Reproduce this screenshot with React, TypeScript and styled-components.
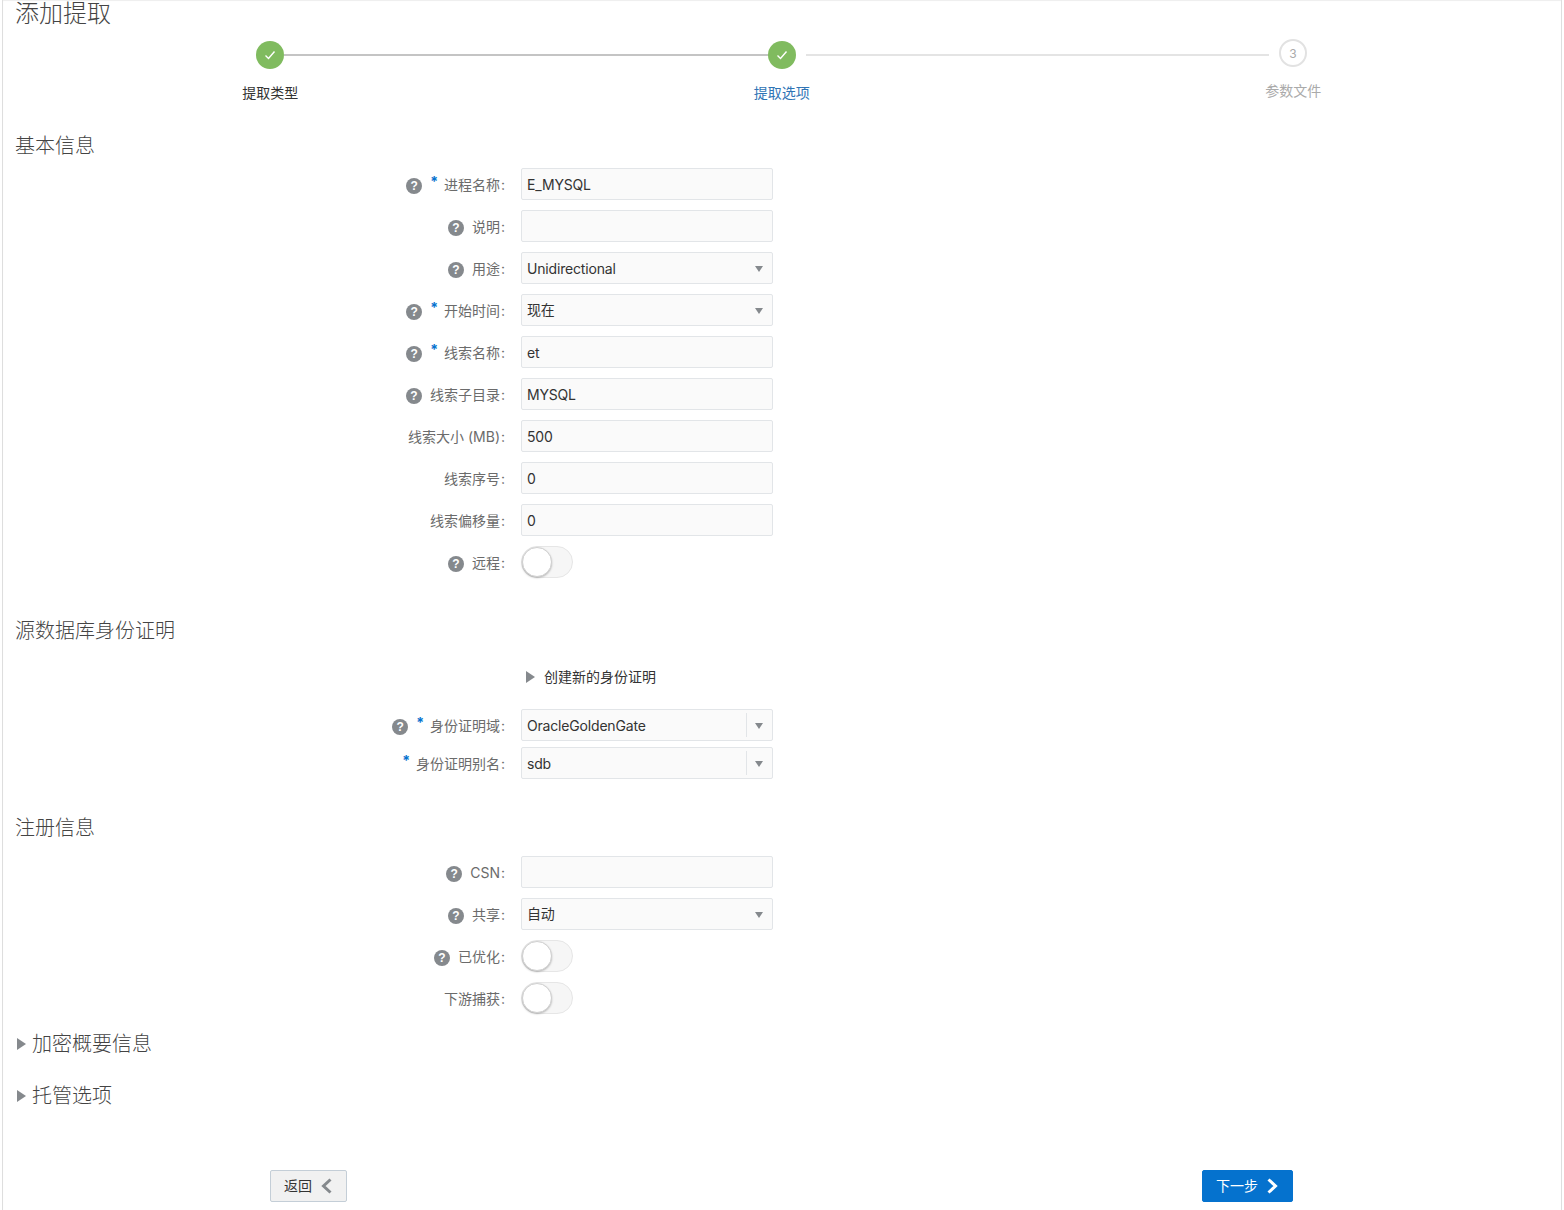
import React from 'react'
import styled, { createGlobalStyle } from 'styled-components'

const Global = createGlobalStyle`
  html, body {
    margin: 0;
    padding: 0;
    background: #fff;
    overflow: hidden;
  }
  body {
    font-family: Inter, "Noto Sans CJK SC", sans-serif;
    color: #333;
  }
`

const Frame = styled.div`
  box-sizing: border-box;
  width: 1560px;
  height: 1210px;
  margin-left: 2px;
  border-left: 1px solid #dedede;
  border-right: 1px solid #dedede;
  overflow: hidden;
  box-shadow: inset 0 1px 1px #eee;
`

const PageTitle = styled.h1`
  margin: 0;
  padding-left: 12px;
  height: 28px;
  font-size: 24px;
  line-height: 28px;
  font-weight: 300;
  color: #444;
`

const StepTrack = styled.div`
  display: flex;
  align-items: flex-start;
  margin-top: 13px;
  padding-left: 253px;
`

const DoneCircle = styled.span`
  display: flex;
  align-items: center;
  justify-content: center;
  flex: none;
  width: 28px;
  height: 28px;
  border-radius: 50%;
  background: #80bb5f;
`

const PendingCircle = styled.span`
  box-sizing: border-box;
  display: flex;
  align-items: center;
  justify-content: center;
  flex: none;
  width: 28px;
  height: 28px;
  margin: -2px 0 0 10px;
  border: 2px solid #e2e2e2;
  border-radius: 50%;
  font-size: 12px;
  color: #aaa;
`

const StepLine = styled.span<{ $pending?: boolean }>`
  flex: none;
  width: ${p => (p.$pending ? '463px' : '484px')};
  height: 2px;
  margin: 13px 0 0 ${p => (p.$pending ? '10px' : '0')};
  background: ${p => (p.$pending ? '#e4e4e4' : '#c4c4c4')};
`

const StepLabels = styled.div`
  display: grid;
  grid-template-columns: repeat(3, 511.5px);
  margin-top: 14px;
  padding-left: 11.5px;
`

const StepLabel = styled.span<{ $state: 'done' | 'active' | 'pending' }>`
  height: 20px;
  font-size: 14px;
  line-height: 20px;
  text-align: center;
  margin-top: ${p => (p.$state === 'pending' ? '-2px' : '0')};
  color: ${p => (p.$state === 'done' ? '#333' : p.$state === 'active' ? '#2f74b5' : '#aaa')};
`

const SectionTitle = styled.h2<{ $top: number }>`
  box-sizing: border-box;
  display: flex;
  align-items: center;
  height: 28px;
  margin: ${p => p.$top}px 0 0;
  padding: 2px 0 0 12px;
  font-size: 20px;
  line-height: 26px;
  font-weight: 300;
  color: #444;
`

const Caret = styled.span`
  flex: none;
  width: 0;
  height: 0;
  margin-right: 6px;
  border-style: solid;
  border-width: 6.5px 0 6.5px 9px;
  border-color: transparent transparent transparent #85898d;
`

const SectionCaret = styled(Caret)`
  margin-left: 2px;
`

const Rows = styled.div<{ $top: number; $gap: number }>`
  display: flex;
  flex-direction: column;
  gap: ${p => p.$gap}px;
  margin-top: ${p => p.$top}px;
`

const Row = styled.div`
  display: flex;
  align-items: center;
  gap: 15px;
  height: 32px;
`

const LabelCell = styled.div`
  display: flex;
  align-items: center;
  justify-content: flex-end;
  flex: none;
  width: 503px;
  font-size: 14px;
  color: #6b6b6b;
`

const Colon = styled.span`
  width: 6px;
  text-align: center;
`

const HelpBadge = styled.span`
  display: flex;
  align-items: center;
  justify-content: center;
  flex: none;
  width: 16px;
  height: 16px;
  margin: 3px 8px 0 0;
  border-radius: 50%;
  background: #85898d;
  color: #fff;
  font-family: "Liberation Sans", sans-serif;
  font-size: 12px;
  font-weight: 700;
`

const Star = styled.span`
  align-self: flex-start;
  margin: 0 6px 0 0;
  font-size: 14px;
  line-height: 16px;
  font-weight: 700;
  color: #0572ce;
`

const Field = styled.div`
  box-sizing: border-box;
  display: flex;
  align-items: center;
  flex: none;
  width: 252px;
  height: 32px;
  padding: 0 9px 0 5px;
  border: 1px solid #e2e5e8;
  border-radius: 2px;
  background: #fafafa;
  font-size: 14px;
  letter-spacing: -0.18px;
  color: #333;
`

const FieldValue = styled.span<{ $cjk?: boolean }>`
  flex: 1;
  padding-bottom: ${p => (p.$cjk ? '2px' : '0')};
`

const Arrow = styled.span`
  flex: none;
  width: 0;
  height: 0;
  margin: 1px 0 0;
  border-style: solid;
  border-width: 6px 4.5px 0;
  border-color: #85898d transparent transparent;
`

const Divider = styled.span`
  flex: none;
  width: 1px;
  height: 24px;
  margin-right: 8px;
  background: #e2e5e8;
`

const Switch = styled.span`
  box-sizing: border-box;
  display: block;
  flex: none;
  width: 52px;
  height: 32px;
  border: 1px solid #e6e6e6;
  border-radius: 16px;
  background: #f6f6f6;
`

const Knob = styled.span`
  box-sizing: border-box;
  display: block;
  width: 30px;
  height: 30px;
  border: 1px solid #d0d0d0;
  border-radius: 50%;
  background: #fff;
  box-shadow: 0 1px 2px rgba(0, 0, 0, 0.25);
`

const ExpandRow = styled.div`
  display: flex;
  align-items: center;
  height: 20px;
  margin-top: 22px;
  padding-left: 523px;
  font-size: 14px;
  color: #333;
`

const ExpandCaret = styled(Caret)`
  margin: 1px 9px 0 0;
`

const Footer = styled.div`
  display: flex;
  justify-content: space-between;
  margin-top: 61px;
  padding: 0 268px 0 267px;
`

const Button = styled.button<{ $primary?: boolean }>`
  box-sizing: border-box;
  display: flex;
  align-items: center;
  gap: 8px;
  height: 32px;
  padding: 0 13px 2px 13px;
  border: 1px solid ${p => (p.$primary ? '#0572ce' : '#c4ced7')};
  border-radius: 2px;
  background: ${p => (p.$primary ? '#0572ce' : '#f1f1f1')};
  color: ${p => (p.$primary ? '#fff' : '#333')};
  font-family: inherit;
  font-size: 14px;
`

const Check = () => (
  <svg width="12" height="12" viewBox="0 0 12 12" fill="none">
    <path d="M1.5 6.5 L4.5 9.5 L10.5 2.5" stroke="#fff" strokeWidth="1.4" />
  </svg>
)

const Chevron = ({ dir, color }: { dir: 'left' | 'right'; color: string }) => (
  <svg width="13" height="16" viewBox="0 0 13 16" fill="none" style={{ marginTop: 2 }}>
    <path
      d={dir === 'left' ? 'M10.5 1.5 L3.5 8 L10.5 14.5' : 'M2.5 1.5 L9.5 8 L2.5 14.5'}
      stroke={color}
      strokeWidth="3"
    />
  </svg>
)

type RowProps = {
  label: string
  help?: boolean
  required?: boolean
  children: React.ReactNode
}

const FormRow = ({ label, help, required, children }: RowProps) => (
  <Row>
    <LabelCell>
      {help && <HelpBadge>?</HelpBadge>}
      {required && <Star>*</Star>}
      {label}
      <Colon>:</Colon>
    </LabelCell>
    {children}
  </Row>
)

const TextField = ({ value }: { value?: string }) => (
  <Field>
    <FieldValue>{value}</FieldValue>
  </Field>
)

const SelectField = ({ value, cjk }: { value: string; cjk?: boolean }) => (
  <Field>
    <FieldValue $cjk={cjk}>{value}</FieldValue>
    <Arrow />
  </Field>
)

const ComboField = ({ value }: { value: string }) => (
  <Field>
    <FieldValue>{value}</FieldValue>
    <Divider />
    <Arrow />
  </Field>
)

const Toggle = () => (
  <Switch>
    <Knob />
  </Switch>
)

const App: React.FC = () => {
  return (
    <>
      <Global />
      <Frame>
        <PageTitle>添加提取</PageTitle>

        <StepTrack>
          <DoneCircle><Check /></DoneCircle>
          <StepLine />
          <DoneCircle><Check /></DoneCircle>
          <StepLine $pending />
          <PendingCircle>3</PendingCircle>
        </StepTrack>
        <StepLabels>
          <StepLabel $state="done">提取类型</StepLabel>
          <StepLabel $state="active">提取选项</StepLabel>
          <StepLabel $state="pending">参数文件</StepLabel>
        </StepLabels>

        <SectionTitle $top={28}>基本信息</SectionTitle>
        <Rows $top={9} $gap={10}>
          <FormRow label="进程名称" help required><TextField value="E_MYSQL" /></FormRow>
          <FormRow label="说明" help><TextField /></FormRow>
          <FormRow label="用途" help><SelectField value="Unidirectional" /></FormRow>
          <FormRow label="开始时间" help required><SelectField value="现在" cjk /></FormRow>
          <FormRow label="线索名称" help required><TextField value="et" /></FormRow>
          <FormRow label="线索子目录" help><TextField value="MYSQL" /></FormRow>
          <FormRow label="线索大小 (MB)"><TextField value="500" /></FormRow>
          <FormRow label="线索序号"><TextField value="0" /></FormRow>
          <FormRow label="线索偏移量"><TextField value="0" /></FormRow>
          <FormRow label="远程" help><Toggle /></FormRow>
        </Rows>

        <SectionTitle $top={38}>源数据库身份证明</SectionTitle>
        <ExpandRow><ExpandCaret />创建新的身份证明</ExpandRow>
        <Rows $top={23} $gap={6}>
          <FormRow label="身份证明域" help required><ComboField value="OracleGoldenGate" /></FormRow>
          <FormRow label="身份证明别名" required><ComboField value="sdb" /></FormRow>
        </Rows>

        <SectionTitle $top={34}>注册信息</SectionTitle>
        <Rows $top={15} $gap={10}>
          <FormRow label="CSN" help><TextField /></FormRow>
          <FormRow label="共享" help><SelectField value="自动" cjk /></FormRow>
          <FormRow label="已优化" help><Toggle /></FormRow>
          <FormRow label="下游捕获"><Toggle /></FormRow>
        </Rows>

        <SectionTitle $top={15}><SectionCaret />加密概要信息</SectionTitle>
        <SectionTitle $top={24}><SectionCaret />托管选项</SectionTitle>

        <Footer>
          <Button>返回<Chevron dir="left" color="#85898d" /></Button>
          <Button $primary>下一步<Chevron dir="right" color="#fff" /></Button>
        </Footer>
      </Frame>
    </>
  )
}

export default App
